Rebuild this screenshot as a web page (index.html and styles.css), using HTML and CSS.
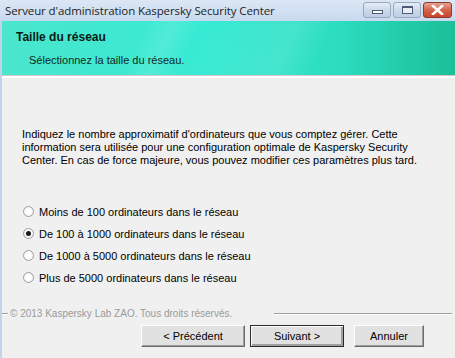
FILE: index.html
```html
<!DOCTYPE html>
<html>
  <head>
    <meta http-equiv="Content-Type" content="text/html; charset=UTF-8">
    <title>Serveur d'administration Kaspersky Security Center</title>
    <link rel="stylesheet" href="styles.css">
  </head>
  <body>
    <div class="ventana">
      <div class="barra_titulo">
        <span class="titulo">Serveur d'administration Kaspersky Security Center</span>
        <div class="botones_ventana">
          <span class="bt_ventana bt_min"><span class="ico_min"></span></span>
          <span class="bt_ventana bt_max"><span class="ico_max"></span></span>
          <span class="bt_ventana bt_cerrar">
            <svg width="13" height="10" viewBox="0 0 13 10">
              <path d="M2 1 L11 9 M11 1 L2 9" stroke="#ffffff" stroke-width="2.6" stroke-linecap="square"/>
            </svg>
          </span>
        </div>
      </div>

      <div class="cuerpo">
        <div class="cabecera">
          <div class="cab_titulo">Taille du réseau</div>
          <div class="cab_sub">Sélectionnez la taille du réseau.</div>
        </div>
        <div class="separador"></div>

        <div class="contenido">
          <p class="explicacion">
            Indiquez le nombre approximatif d'ordinateurs que vous comptez gérer. Cette<br>
            information sera utilisée pour une configuration optimale de Kaspersky Security<br>
            Center. En cas de force majeure, vous pouvez modifier ces paramètres plus tard.
          </p>

          <div class="opciones">
            <label class="opcion"><span class="radio"></span>Moins de 100 ordinateurs dans le réseau</label>
            <label class="opcion"><span class="radio marcado"></span>De 100 à 1000 ordinateurs dans le réseau</label>
            <label class="opcion"><span class="radio"></span>De 1000 à 5000 ordinateurs dans le réseau</label>
            <label class="opcion"><span class="radio"></span>Plus de 5000 ordinateurs dans le réseau</label>
          </div>
        </div>

        <div class="pie">
          <span class="linea_corta"></span>
          <span class="copyright">© 2013 Kaspersky Lab ZAO. Tous droits réservés.</span>
          <span class="linea_larga"></span>
        </div>

        <div class="botones">
          <span class="boton bt_prev">&lt; Précédent</span>
          <span class="boton bt_sig">Suivant &gt;</span>
          <span class="boton bt_cancel">Annuler</span>
        </div>
      </div>
    </div>
  </body>
</html>
```
FILE: styles.css
```css
html, body {
  margin: 0;
  padding: 0;
}

body {
  width: 455px;
  height: 358px;
  overflow: hidden;
  font-family: "Liberation Sans", Arial, sans-serif;
  font-size: 11px;
  color: #000;
  background: #f0f0f0;
}

.ventana {
  height: 358px;
  display: flex;
  flex-direction: column;
}

/* barra de titulo */
.barra_titulo {
  height: 21px;
  flex: none;
  display: flex;
  align-items: center;
  justify-content: space-between;
  background: linear-gradient(to bottom, #dce7f5, #c8d9ee);
}

.titulo {
  padding-left: 5px;
  font-family: "Open Sans", "Liberation Sans", sans-serif;
  font-size: 11.5px;
  color: #1e1e1e;
  letter-spacing: -0.1px;
}

.botones_ventana {
  display: flex;
  gap: 2px;
  padding-right: 3px;
  align-self: flex-start;
  padding-top: 2px;
}

.bt_ventana {
  width: 28px;
  height: 16px;
  border: 1px solid #98a8be;
  border-radius: 3px;
  box-sizing: border-box;
  display: flex;
  align-items: center;
  justify-content: center;
  background: linear-gradient(to bottom, #e6edf7, #cdd9ea 50%, #bfcee3);
}

.bt_cerrar {
  width: 29px;
  border-color: #8a3a2c;
  background: linear-gradient(to bottom, #e8a493, #d4634c 50%, #c8452c);
}

.ico_min {
  width: 11px;
  height: 4px;
  margin-top: 4px;
  border: 1px solid #4c5c74;
  background: #fff;
  box-sizing: border-box;
}

.ico_max {
  width: 11px;
  height: 8px;
  border: 1px solid #4c5c74;
  border-top-width: 2px;
  background: #e9eef6;
  box-sizing: border-box;
}

/* cuerpo */
.cuerpo {
  flex: 1;
  border-left: 2px solid #c3d4ea;
  display: flex;
  flex-direction: column;
}

.cabecera {
  height: 54px;
  box-sizing: border-box;
  padding: 9px 0 0 14px;
  background:
    linear-gradient(115deg, rgba(255,255,255,0) 30%, rgba(255,255,255,0.12) 36%, rgba(255,255,255,0) 42%, rgba(255,255,255,0.1) 62%, rgba(255,255,255,0) 70%),
    linear-gradient(to right, #4ae6cd, #36ead3 45%, #2bdcbe 75%, #1cbf98);
}

.cab_titulo {
  font-weight: bold;
  font-size: 12px;
  color: #0c1a14;
}

.cab_sub {
  margin-top: 10px;
  padding-left: 13px;
  color: #0f2a22;
}

.separador {
  height: 2px;
  border-top: 1px solid #d8c8cc;
  background: #ffffff;
}

.contenido {
  padding: 0 0 0 20px;
}

.explicacion {
  margin: 50px 0 0;
  line-height: 13px;
}

.opciones {
  margin-top: 38px;
  display: flex;
  flex-direction: column;
  gap: 9px;
}

.opcion {
  height: 13px;
  display: flex;
  align-items: center;
  gap: 5px;
  padding-left: 1px;
}

.radio {
  width: 11px;
  height: 11px;
  border-radius: 50%;
  border: 1px solid #a0a0a0;
  box-sizing: border-box;
  background: radial-gradient(circle, #ffffff 40%, #e4e4e4);
  display: flex;
  align-items: center;
  justify-content: center;
}

.radio.marcado::after {
  content: "";
  width: 5px;
  height: 5px;
  border-radius: 50%;
  background: #1a1a1a;
}

/* pie */
.pie {
  margin-top: 23px;
  display: flex;
  align-items: center;
  height: 13px;
}

.linea_corta {
  width: 6px;
  border-top: 1px solid #a0a0a0;
  border-bottom: 1px solid #ffffff;
}

.copyright {
  color: #9a9a9a;
  font-size: 10px;
  padding: 0 2px;
}

.linea_larga {
  flex: 1;
  margin: 0 3px 0 40px;
  border-top: 1px solid #a0a0a0;
  border-bottom: 1px solid #ffffff;
}

.botones {
  margin-top: 5px;
  display: flex;
  padding-left: 139px;
}

.boton {
  height: 22px;
  box-sizing: border-box;
  display: flex;
  align-items: center;
  justify-content: center;
  background: #e1e1e1;
  border: 1px solid #ffffff;
  border-right-color: #696969;
  border-bottom-color: #696969;
  box-shadow: inset -1px -1px 0 #a0a0a0;
}

.bt_prev {
  width: 104px;
}

.bt_sig {
  width: 94px;
  margin-left: 5px;
  border: 1px solid #2b2b2b;
  box-shadow: inset 1px 1px 0 #ffffff, inset -2px -2px 0 #a0a0a0;
}

.bt_cancel {
  width: 70px;
  margin-left: 10px;
}
```
